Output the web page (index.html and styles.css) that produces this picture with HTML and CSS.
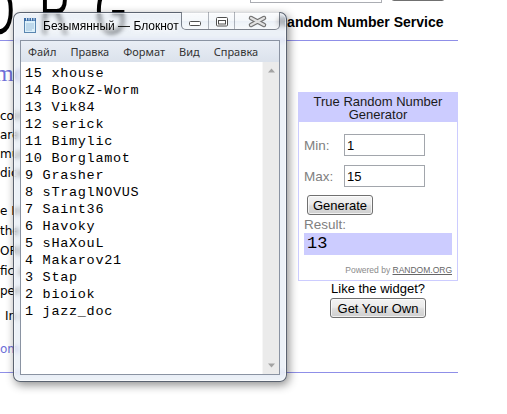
FILE: index.html
```html
<!DOCTYPE html>
<html lang="ru">
<head>
    <meta charset="UTF-8">
    <meta name="viewport" content="width=device-width, initial-scale=1.0">
    <title>Random Number Service</title>
    <link rel="stylesheet" href="styles.css">
</head>
<body>
    <div class="page">
        <div class="masthead">
            <div class="logo">ORG</div>
            <div class="masthead-right">
                <div class="search">
                    <input class="search-box" type="text">
                    <button class="btn search-btn">Search</button>
                </div>
                <h1 class="service">Random Number Service</h1>
            </div>
        </div>
        <div class="rule"></div>

        <div class="content">
            <div class="intro">
                <h2 class="intro-title">more about randomness</h2>
                <p class="lead">coin flips, dice rolls and card draws<br>are all made from atmospheric noise<br>music and art projects use it too<br>dice games and lotteries as well</p>
                <p class="more">e Internet, free of charge.<br>the randomness comes from radio noise<br>ORG is used by many people for<br>fic applications as well as<br>personal ones.</p>
                <p class="note">In short, it is truly random.</p>
                <p class="link">om RANDOM.ORG</p>
            </div>

            <aside class="sidebar">
                <div class="widget">
                    <div class="widget-head">True Random Number<br>Generator</div>
                    <div class="widget-body">
                        <div class="fields">
                            <span class="field-label">Min:</span>
                            <input class="field-input" type="text" value="1">
                            <span class="field-label">Max:</span>
                            <input class="field-input" type="text" value="15">
                        </div>
                        <button class="btn generate">Generate</button>
                        <div class="result-label">Result:</div>
                        <div class="result">13</div>
                        <div class="powered">Powered by <a href="#">RANDOM.ORG</a></div>
                    </div>
                </div>
                <div class="like">Like the widget?</div>
                <button class="btn get-own">Get Your Own</button>
            </aside>
        </div>
        <div class="rule rule-bottom"></div>
    </div>

    <!-- Notepad window over the page -->
    <div class="notepad">
        <div class="np-titlebar">
            <svg class="np-icon" width="16" height="16" viewBox="0 0 16 16">
                <rect x="2.5" y="2.5" width="11" height="13" fill="#dcf0fa" stroke="#5a86b0"/>
                <path d="M4 7h8M4 9h8M4 11h8M4 13h6" stroke="#9fc0dc"/>
                <rect x="2" y="1" width="12" height="3" fill="#3d6da6"/>
                <path d="M4.5 0.5v3M7 0.5v3M9.5 0.5v3M12 0.5v3" stroke="#d4e4f2"/>
            </svg>
            <span class="np-title">Безымянный — Блокнот</span>
            <div class="np-caption">
                <span class="cap-btn cap-min">
                    <svg width="26" height="18" viewBox="0 0 26 18"><rect x="7.5" y="9.5" width="11" height="4" rx="1" fill="#fff" stroke="#4e4e4e"/></svg>
                </span>
                <span class="cap-btn cap-max">
                    <svg width="26" height="18" viewBox="0 0 26 18"><rect x="7.5" y="5.5" width="11" height="8.5" rx="1" fill="#fff" stroke="#4e4e4e"/><rect x="9.5" y="8.5" width="7" height="3.5" fill="#fff" stroke="#4e4e4e"/></svg>
                </span>
                <span class="cap-btn cap-close">
                    <svg width="45" height="18" viewBox="0 0 45 18"><path d="M16 6L29 13M29 6L16 13" stroke="#707070" stroke-width="4.5" stroke-linecap="round"/><path d="M16 6L29 13M29 6L16 13" stroke="#e2e2e2" stroke-width="2.2" stroke-linecap="round"/></svg>
                </span>
            </div>
        </div>
        <div class="np-client">
            <div class="np-menu">
                <span>Файл</span>
                <span>Правка</span>
                <span>Формат</span>
                <span>Вид</span>
                <span>Справка</span>
            </div>
            <div class="np-edit">
<pre class="np-text">15 xhouse
14 BookZ-Worm
13 Vik84
12 serick
11 Bimylic
10 Borglamot
9 Grasher
8 sTraglNOVUS
7 Saint36
6 Havoky
5 sHaXouL
4 Makarov21
3 Stap
2 bioiok
1 jazz_doc</pre>
                <div class="np-scroll">
                    <svg width="17" height="17" viewBox="0 0 17 17"><path d="M5 10.5h7l-3.5-4z" fill="#a3a3a3"/></svg>
                    <svg width="17" height="17" viewBox="0 0 17 17"><path d="M5 6.5h7l-3.5 4z" fill="#a3a3a3"/></svg>
                </div>
            </div>
        </div>
    </div>
</body>
</html>
```

FILE: styles.css
```css
* {
    box-sizing: border-box;
}
html, body {
    margin: 0;
    padding: 0;
}
body {
    position: relative;
    width: 507px;
    height: 414px;
    overflow: hidden;
    background: #fff;
    color: #000;
    font-family: "Liberation Sans", Arial, sans-serif;
}

/* page behind the window */
.page {
    width: 458px;
}
.masthead {
    display: flex;
    height: 40px;
}
.logo {
    flex: none;
    width: 268px;
    height: 68px;
    margin: -24px 0 0 -18px;
    font-size: 68px;
    line-height: 68px;
    letter-spacing: 40px;
    white-space: nowrap;
    transform: scaleX(0.62);
    transform-origin: 0 0;
}
.masthead-right {
    width: 208px;
}
.search {
    display: flex;
    gap: 9px;
    height: 22px;
    margin-top: -19px;
}
.search-box {
    width: 132px;
    height: 22px;
    padding: 0;
    border: 1px solid #abadb3;
}
.search-btn {
    width: 54px;
    height: 22px;
}
.service {
    margin: 11px 0 0;
    padding-left: 27px;
    font-size: 14px;
    line-height: 16px;
    font-weight: bold;
    white-space: nowrap;
}
.rule {
    border-top: 1px solid #8f8fe8;
}
.rule-bottom {
    margin-top: 13px;
}

.content {
    display: flex;
}
.intro {
    flex: none;
    width: 298px;
    overflow: hidden;
    white-space: nowrap;
    font-family: "DejaVu Sans", sans-serif;
    font-size: 12px;
}
.intro-title {
    margin: 18px 0 0 -5px;
    font: normal 24px/28px "Liberation Serif", serif;
    color: #6e6ed8;
}
.intro p {
    margin: 0;
    line-height: 19px;
}
.intro .lead {
    margin-top: 20px;
}
.intro .more {
    margin-top: 18px;
    line-height: 20px;
}
.intro .note {
    margin-top: 5px;
    padding-left: 5px;
    line-height: 20px;
}
.intro .link {
    margin-top: 14px;
    color: #6e6ed8;
}

/* widget */
.sidebar {
    width: 160px;
    margin-top: 51px;
}
.widget {
    border: 1px solid #ccccff;
}
.widget-head {
    padding: 2px 0 1px;
    background: #ccccff;
    text-align: center;
    font-size: 13px;
    line-height: 13px;
    color: #1a1a1a;
}
.widget-body {
    padding: 12px 5px 4px;
}
.fields {
    display: grid;
    grid-template-columns: 40px 81px;
    row-gap: 9px;
    align-items: center;
}
.field-label,
.result-label {
    color: #808080;
    font-size: 13.5px;
}
.field-input {
    width: 81px;
    height: 22px;
    padding: 0 0 0 2px;
    border: 1px solid #a2a6ac;
    font: 13px "Liberation Sans", Arial, sans-serif;
    color: #000;
}
.btn {
    padding: 0;
    height: 20px;
    border: 1px solid #707070;
    border-radius: 3px;
    background: linear-gradient(#f3f3f3 0%, #ebebeb 45%, #dddddd 55%, #cfcfcf 100%);
    box-shadow: inset 0 0 0 1px rgba(255, 255, 255, 0.7);
    font: 13px "Liberation Sans", Arial, sans-serif;
    color: #000;
}
.generate {
    display: block;
    width: 66px;
    margin: 8px 0 0 3px;
}
.result-label {
    margin-top: 2px;
    line-height: 16px;
}
.result {
    height: 22px;
    padding-left: 3px;
    background: #ccccff;
    font: 17px/22px "Liberation Mono", monospace;
}
.powered {
    margin-top: 10px;
    text-align: right;
    font-size: 8.5px;
    line-height: 11px;
    color: #8a8a8a;
}
.powered a {
    color: #666;
}
.like {
    text-align: center;
    font-size: 13px;
    line-height: 15px;
}
.get-own {
    display: block;
    width: 96px;
    margin: 2px auto 0;
}

/* notepad window */
.notepad {
    position: absolute;
    left: 13px;
    top: 12px;
    width: 274px;
    height: 370px;
    padding: 0 6px 6px;
    display: flex;
    flex-direction: column;
    border: 1px solid rgba(30, 40, 55, 0.7);
    border-radius: 7px;
    background: rgba(224, 231, 241, 0.6);
    backdrop-filter: blur(2px);
    box-shadow: 2px 3px 10px rgba(0, 0, 0, 0.45), inset 0 0 0 1px rgba(255, 255, 255, 0.55);
    font-family: "Noto Sans", sans-serif;
}
.np-titlebar {
    flex: none;
    height: 27px;
    display: flex;
    align-items: flex-start;
}
.np-icon {
    flex: none;
    margin: 4px 0 0 2px;
}
.np-title {
    flex: 1;
    min-width: 0;
    overflow: hidden;
    margin: 5px 0 0 5px;
    font-family: "Liberation Sans", Arial, sans-serif;
    font-size: 12px;
    line-height: 16px;
    white-space: nowrap;
    text-shadow: 0 0 6px #fff, 0 0 6px #fff;
}
.np-caption {
    flex: none;
    display: flex;
    height: 18px;
    margin: -1px 0 0 2px;
    border: 1px solid rgba(40, 50, 65, 0.6);
    border-top: none;
    border-radius: 0 0 5px 5px;
    overflow: hidden;
    background: linear-gradient(rgba(255, 255, 255, 0.8), rgba(255, 255, 255, 0.45) 50%, rgba(232, 238, 246, 0.4) 51%, rgba(255, 255, 255, 0.6));
}
.cap-btn {
    display: block;
    height: 18px;
    border-left: 1px solid rgba(40, 50, 65, 0.35);
}
.cap-btn:first-child {
    border-left: none;
}
.cap-min,
.cap-max {
    width: 26px;
}
.cap-close {
    width: 45px;
}
.cap-close svg {
    filter: blur(0.5px);
}
.np-client {
    flex: 1;
    min-height: 0;
    display: flex;
    flex-direction: column;
    border: 1px solid #8a93a2;
    background: #fff;
}
.np-menu {
    flex: none;
    height: 21px;
    display: flex;
    gap: 14px;
    padding-left: 7px;
    background: linear-gradient(#e9eef5, #dbe2ec);
    font-size: 11px;
    line-height: 21px;
    color: #333;
}
.np-edit {
    flex: 1;
    min-height: 0;
    display: flex;
}
.np-text {
    flex: 1;
    margin: 0;
    padding: 3px 0 0 4px;
    font: 13.5px/17px "Liberation Mono", monospace;
    letter-spacing: 0.7px;
    color: #000;
}
.np-scroll {
    flex: none;
    width: 17px;
    display: flex;
    flex-direction: column;
    justify-content: space-between;
    background: #ebebeb;
    border-left: 1px solid #f6f6f6;
}
```
